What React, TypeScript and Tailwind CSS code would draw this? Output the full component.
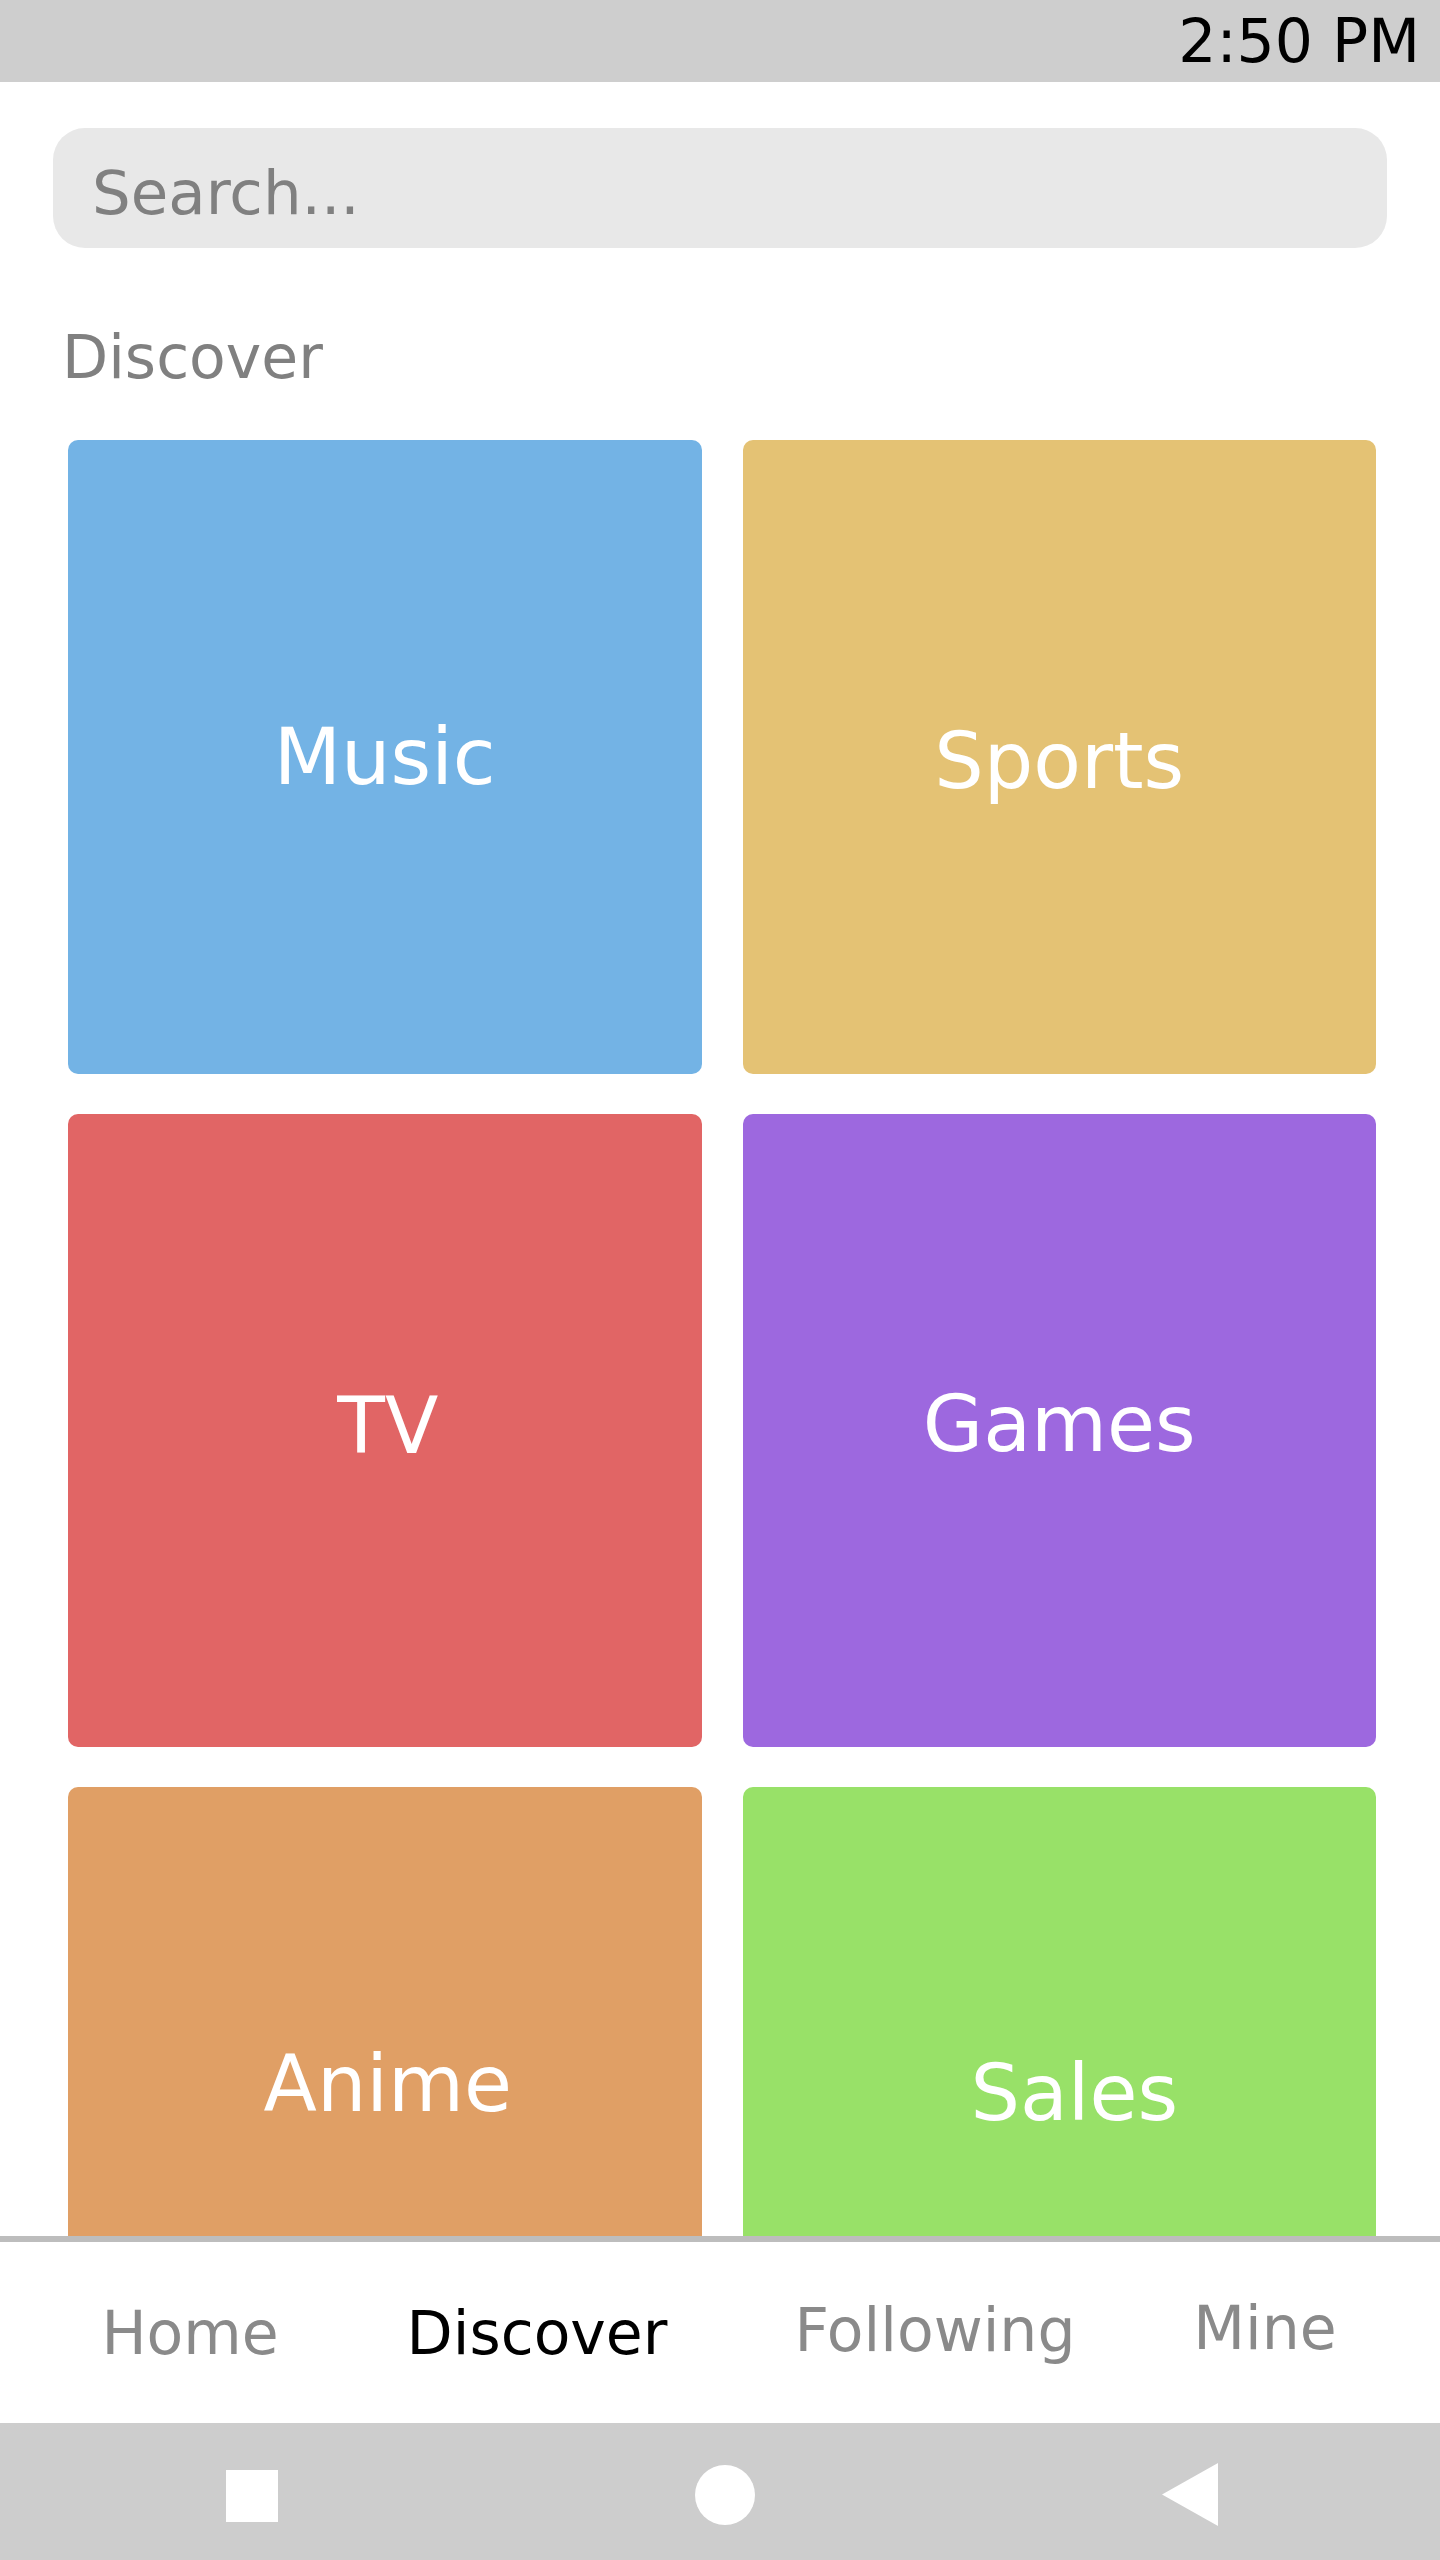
const categories = [
  { name: "Music", color: "bg-[#73b3e5]", shift: "" },
  { name: "Sports", color: "bg-[#e4c274]", shift: "mt-[8px]" },
  { name: "TV", color: "bg-[#e16565]", shift: "-mt-[8px] ml-[6px]" },
  { name: "Games", color: "bg-[#9d68df]", shift: "-mt-[12px]" },
  { name: "Anime", color: "bg-[#e09f65]", shift: "-mt-[40px] ml-[6px]" },
  { name: "Sales", color: "bg-[#98e168]", shift: "-mt-[22px] ml-[30px]" },
];

const App = () => {
  return (
    <div className="w-[1440px] h-[2560px] flex flex-col bg-white overflow-hidden font-['DejaVu_Sans',sans-serif]">
      {/* status bar */}
      <div className="h-[82px] shrink-0 bg-[#cecece] flex items-center justify-end pr-[20px]">
        <span className="text-[60px] leading-none text-black">2:50 PM</span>
      </div>

      {/* scrolling content */}
      <div className="flex-1 overflow-hidden">
        <div className="mx-[53px] mt-[46px] h-[120px] rounded-[32px] bg-[#e8e8e8] flex items-center pl-[39px] pt-[8px]">
          <span className="text-[61px] leading-none text-[#808080]">Search...</span>
        </div>

        <div className="mt-[73px] pl-[62px] text-[60px] leading-[72px] text-[#808080]">Discover</div>

        <div className="grid grid-cols-2 gap-x-[41px] gap-y-[40px] pl-[68px] pr-[64px] mt-[47px]">
          {categories.map((c) => (
            <button
              key={c.name}
              className={`aspect-square rounded-[10px] ${c.color} flex items-center justify-center`}
            >
              <span className={`text-[78px] leading-none text-white ${c.shift}`}>{c.name}</span>
            </button>
          ))}
        </div>
      </div>

      {/* tab bar */}
      <div className="h-[187px] shrink-0 border-t-[6px] border-[#bdbdbd] bg-white grid grid-cols-4 items-center text-[60px] leading-none">
        <span className="text-center text-[#8a8a8a] pl-[20px]">Home</span>
        <span className="text-center text-black pr-[6px]">Discover</span>
        <span className="text-center text-[#8a8a8a] pl-[70px] -mt-[6px]">Following</span>
        <span className="text-center text-[#8a8a8a] pl-[10px] -mt-[10px]">Mine</span>
      </div>

      {/* system nav */}
      <div className="h-[137px] shrink-0 bg-[#cdcdcd] flex items-center">
        <div className="w-[480px] flex justify-center pl-[24px] pt-[8px]">
          <div className="w-[52px] h-[52px] bg-white" />
        </div>
        <div className="w-[480px] flex justify-center pl-[10px] pt-[6px]">
          <div className="w-[60px] h-[60px] rounded-full bg-white" />
        </div>
        <div className="w-[480px] flex justify-center pr-[20px] pt-[6px]">
          <svg width="56" height="63" viewBox="0 0 56 63">
            <polygon points="56,0 56,63 0,31.5" fill="#fff" />
          </svg>
        </div>
      </div>
    </div>
  );
};

export default App;
